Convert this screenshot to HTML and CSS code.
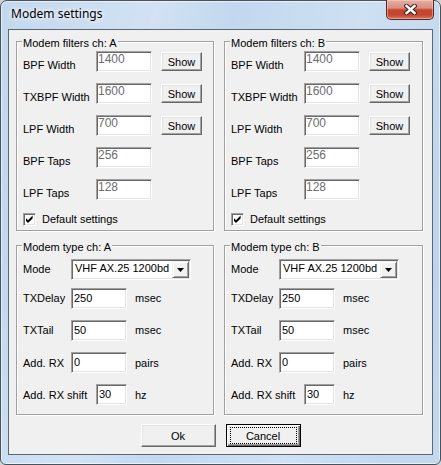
FILE: index.html
```html
<!DOCTYPE html>
<html>
<head>
<meta charset="utf-8">
<title>Modem settings</title>
<link rel="stylesheet" href="styles.css">
</head>
<body>
<div class="window">
  <div class="titlebar">
    <span class="title">Modem settings</span>
    <div class="close">
      <svg width="13" height="11" viewBox="0 0 13 11">
        <path d="M2.5 2 L10.5 9 M10.5 2 L2.5 9" stroke="#3b2420" stroke-width="4.6" stroke-linecap="square"/>
        <path d="M2.5 2 L10.5 9 M10.5 2 L2.5 9" stroke="#ffffff" stroke-width="2.4" stroke-linecap="square"/>
      </svg>
    </div>
  </div>
  <div class="client">
    <div class="groups">
      <div class="group fgroup">
        <span class="caption">Modem filters ch: A</span>
        <div class="frow"><span class="flbl">BPF Width</span><div class="edit fedit">1400</div><button class="btn show">Show</button></div>
        <div class="frow"><span class="flbl">TXBPF Width</span><div class="edit fedit">1600</div><button class="btn show">Show</button></div>
        <div class="frow"><span class="flbl">LPF Width</span><div class="edit fedit">700</div><button class="btn show">Show</button></div>
        <div class="frow"><span class="flbl">BPF Taps</span><div class="edit fedit">256</div></div>
        <div class="frow"><span class="flbl">LPF Taps</span><div class="edit fedit">128</div></div>
        <div class="check-row">
          <span class="checkbox"><svg width="11" height="11" viewBox="0 0 11 11"><polygon points="2,4.2 4,6.2 8.6,1.6 8.6,4.4 4,9 2,7" fill="#000"/></svg></span>
          <span>Default settings</span>
        </div>
      </div>
      <div class="group fgroup">
        <span class="caption">Modem filters ch: B</span>
        <div class="frow"><span class="flbl">BPF Width</span><div class="edit fedit">1400</div><button class="btn show">Show</button></div>
        <div class="frow"><span class="flbl">TXBPF Width</span><div class="edit fedit">1600</div><button class="btn show">Show</button></div>
        <div class="frow"><span class="flbl">LPF Width</span><div class="edit fedit">700</div><button class="btn show">Show</button></div>
        <div class="frow"><span class="flbl">BPF Taps</span><div class="edit fedit">256</div></div>
        <div class="frow"><span class="flbl">LPF Taps</span><div class="edit fedit">128</div></div>
        <div class="check-row">
          <span class="checkbox"><svg width="11" height="11" viewBox="0 0 11 11"><polygon points="2,4.2 4,6.2 8.6,1.6 8.6,4.4 4,9 2,7" fill="#000"/></svg></span>
          <span>Default settings</span>
        </div>
      </div>
      <div class="group tgroup">
        <span class="caption">Modem type ch: A</span>
        <div class="trow mode-row"><span class="tlbl">Mode</span>
          <div class="combo"><span class="combo-text">VHF AX.25 1200bd</span><span class="drop"><svg width="7" height="4" viewBox="0 0 7 4"><polygon points="0,0 7,0 3.5,4" fill="#000"/></svg></span></div>
        </div>
        <div class="trow"><span class="tlbl">TXDelay</span><div class="edit tedit">250</div><span class="unit">msec</span></div>
        <div class="trow"><span class="tlbl">TXTail</span><div class="edit tedit">50</div><span class="unit">msec</span></div>
        <div class="trow low"><span class="tlbl">Add. RX</span><div class="edit tedit">0</div><span class="unit">pairs</span></div>
        <div class="trow low"><span class="tlbl wide">Add. RX shift</span><div class="edit tedit short">30</div><span class="unit">hz</span></div>
      </div>
      <div class="group tgroup">
        <span class="caption">Modem type ch: B</span>
        <div class="trow mode-row"><span class="tlbl">Mode</span>
          <div class="combo"><span class="combo-text">VHF AX.25 1200bd</span><span class="drop"><svg width="7" height="4" viewBox="0 0 7 4"><polygon points="0,0 7,0 3.5,4" fill="#000"/></svg></span></div>
        </div>
        <div class="trow"><span class="tlbl">TXDelay</span><div class="edit tedit">250</div><span class="unit">msec</span></div>
        <div class="trow"><span class="tlbl">TXTail</span><div class="edit tedit">50</div><span class="unit">msec</span></div>
        <div class="trow low"><span class="tlbl">Add. RX</span><div class="edit tedit">0</div><span class="unit">pairs</span></div>
        <div class="trow low"><span class="tlbl wide">Add. RX shift</span><div class="edit tedit short">30</div><span class="unit">hz</span></div>
      </div>
    </div>
    <div class="buttons">
      <button class="btn push">Ok</button>
      <button class="btn push default">Cancel</button>
    </div>
  </div>
</div>
</body>
</html>
```
FILE: styles.css
```css
html, body {
  margin: 0;
  padding: 0;
}
body {
  background: #cfd3d8;
  font-family: "Liberation Sans", Arial, sans-serif;
  font-size: 11px;
  color: #000;
}
.window {
  width: 441px;
  height: 465px;
  box-sizing: border-box;
  border: 1px solid #48525e;
  border-radius: 7px 7px 6px 6px;
  background:
    linear-gradient(100deg, rgba(255,255,255,0) 0%, rgba(255,255,255,0.25) 30%, rgba(255,255,255,0) 45%, rgba(255,255,255,0.2) 70%, rgba(255,255,255,0) 90%),
    linear-gradient(#c3d8ee, #bdd4ec 60%, #c3d9f0);
  box-shadow: inset 0 0 0 1px rgba(255,255,255,0.6);
  display: flex;
  flex-direction: column;
}
.titlebar {
  height: 28px;
  display: flex;
  align-items: flex-start;
  padding: 0 6px 0 10px;
}
.title {
  flex: 1;
  margin-top: 5px;
  font-family: "Noto Sans", "Open Sans", sans-serif;
  font-size: 12px;
  line-height: 16px;
  color: #000;
  text-shadow: 0 0 5px #ffffff, 0 0 9px rgba(255,255,255,0.9);
}
.close {
  width: 48px;
  height: 20px;
  margin-top: -1px;
  box-sizing: border-box;
  border: 1px solid #5a2a22;
  border-top: none;
  border-radius: 0 0 5px 5px;
  background: linear-gradient(#e6b0a4 0%, #d98f80 42%, #c6442f 52%, #c24632 78%, #d8775f 100%);
  box-shadow: inset 0 0 0 1px rgba(255,220,210,0.45);
  display: flex;
  align-items: center;
  justify-content: center;
}
.close svg {
  display: block;
}
.client {
  margin: 0 7px;
  height: 426px;
  box-sizing: border-box;
  border: 1px solid #5b6774;
  background: #f0f0f0;
  display: flex;
  flex-direction: column;
}
.groups {
  display: grid;
  grid-template-columns: 198px 199px;
  grid-template-rows: 190px 170px;
  column-gap: 10px;
  row-gap: 14px;
  padding: 11px 0 0 7px;
}
.group {
  position: relative;
  box-sizing: border-box;
  border: 1px solid #a0a0a0;
  box-shadow: inset 1px 1px 0 #ffffff, 1px 1px 0 #ffffff;
  display: flex;
  flex-direction: column;
}
.caption {
  position: absolute;
  top: -5px;
  left: 5px;
  padding: 0 1px;
  line-height: 13px;
  background: #f0f0f0;
}
.fgroup {
  padding: 9px 0 0 6px;
  gap: 11px;
}
.frow {
  display: flex;
  align-items: flex-start;
  height: 21px;
}
.flbl {
  width: 73px;
  margin-top: 8px;
  line-height: 13px;
  white-space: nowrap;
}
.edit {
  box-sizing: border-box;
  height: 21px;
  border: 1px solid;
  border-color: #a0a0a0 #ffffff #ffffff #a0a0a0;
  box-shadow: inset 1px 1px 0 #696969, inset -1px -1px 0 #e3e3e3;
  background: #ffffff;
  line-height: 13px;
  white-space: nowrap;
}
.fedit {
  width: 56px;
  padding: 0 0 0 1px;
  font-size: 12px;
  line-height: 14px;
  color: #6d6d6d;
}
.btn {
  font-family: "Liberation Sans", Arial, sans-serif;
  font-size: 11px;
  color: #000;
  background: #f0f0f0;
  border: 1px solid;
  border-color: #ffffff #696969 #696969 #ffffff;
  box-shadow: inset -1px -1px 0 #a0a0a0, inset 1px 1px 0 #e3e3e3;
  padding: 0;
  margin: 0;
  box-sizing: border-box;
}
.show {
  width: 41px;
  height: 19px;
  margin-left: 9px;
  align-self: center;
}
.check-row {
  display: flex;
  align-items: center;
  gap: 6px;
  height: 13px;
  margin-top: 2px;
  line-height: 13px;
}
.checkbox {
  box-sizing: border-box;
  width: 13px;
  height: 13px;
  border: 1px solid;
  border-color: #a0a0a0 #ffffff #ffffff #a0a0a0;
  box-shadow: inset 1px 1px 0 #696969, inset -1px -1px 0 #e3e3e3;
  background: #ffffff;
}
.checkbox svg {
  display: block;
}
.tgroup {
  padding: 13px 0 0 6px;
  gap: 11px;
}
.trow {
  display: flex;
  align-items: flex-start;
  height: 21px;
}
.mode-row {
  margin-bottom: -3px;
}
.tlbl {
  width: 48px;
  margin-top: 4px;
  line-height: 13px;
  white-space: nowrap;
}
.tlbl.wide {
  width: 73px;
}
.low .tlbl,
.low .unit {
  margin-top: 5px;
}
.tedit {
  width: 56px;
  padding: 3px 0 0 2px;
}
.tedit.short {
  width: 31px;
}
.unit {
  margin-left: 8px;
  margin-top: 4px;
  line-height: 13px;
}
.combo {
  box-sizing: border-box;
  width: 120px;
  height: 21px;
  border: 1px solid;
  border-color: #a0a0a0 #ffffff #ffffff #a0a0a0;
  box-shadow: inset 1px 1px 0 #696969, inset -1px -1px 0 #e3e3e3;
  background: #ffffff;
  display: flex;
  align-items: flex-start;
  padding: 1px 1px 1px 3px;
}
.combo-text {
  flex: 1;
  line-height: 13px;
  padding-top: 1px;
  white-space: nowrap;
}
.drop {
  box-sizing: border-box;
  width: 17px;
  height: 17px;
  background: #f0f0f0;
  border: 1px solid;
  border-color: #f0f0f0 #696969 #696969 #f0f0f0;
  box-shadow: inset 1px 1px 0 #ffffff, inset -1px -1px 0 #a0a0a0;
  display: flex;
  align-items: center;
  justify-content: center;
}
.drop svg {
  display: block;
}
.buttons {
  display: flex;
  justify-content: center;
  gap: 10px;
  margin-top: 9px;
}
.push {
  width: 75px;
  height: 23px;
}
.default {
  position: relative;
  border-color: #000000;
  box-shadow: inset 1px 1px 0 #ffffff, inset -1px -1px 0 #696969, inset -2px -2px 0 #a0a0a0;
}
.default::after {
  content: "";
  position: absolute;
  top: 2px;
  bottom: 2px;
  left: 3px;
  right: 3px;
  border: 1px dotted #000000;
}
```
